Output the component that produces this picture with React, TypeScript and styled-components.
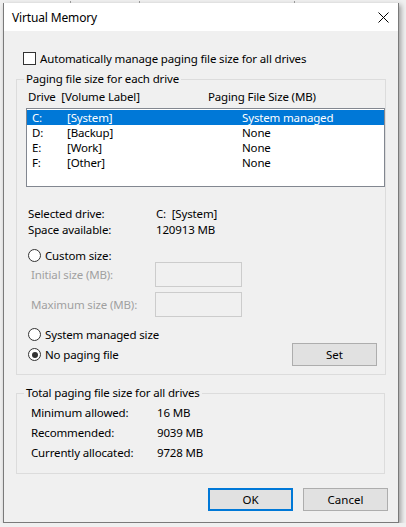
import React from 'react';
import styled, { createGlobalStyle } from 'styled-components';

const Global = createGlobalStyle`
  html, body {
    margin: 0;
    padding: 0;
    background: #f0f0f0;
    font-family: 'Segoe UI', 'Noto Sans', 'Open Sans', sans-serif;
    font-size: 11.5px;
    letter-spacing: -0.15px;
    color: #000;
  }
`;

const BackTabs = styled.div`
  height: 3px;
  overflow: hidden;
  white-space: nowrap;
  color: #333;

  span {
    display: inline-block;
    margin-top: -12px;
    padding: 0 8px;
    line-height: 14px;
    border-right: 1px solid #999;
  }
`;

const Window = styled.div`
  margin-left: 3px;
  width: 394px;
  border: 1px solid #7a7a7a;
  border-top: none;
  background: #f0f0f0;
  box-shadow: 2px 2px 5px rgba(0, 0, 0, 0.35);
`;

const TitleBar = styled.div`
  height: 28px;
  background: #fff;
  display: flex;
  align-items: center;
  justify-content: space-between;
  padding: 0 9px 0 8px;
`;

const Title = styled.span`
  font-size: 12px;
`;

const Body = styled.div`
  padding: 20px 10px 11px 12px;
  display: flex;
  flex-direction: column;
`;

const CheckRow = styled.label`
  display: flex;
  align-items: center;
  gap: 4px;
  height: 14px;
  margin-left: 7px;
`;

const Box = styled.span`
  width: 11px;
  height: 11px;
  border: 1px solid #333;
  background: #fff;
`;

const Group = styled.fieldset<{ $top: number; $padBottom: number }>`
  margin: ${(p) => p.$top}px 0 0 0;
  border: 1px solid #dcdcdc;
  padding: 0 0 ${(p) => p.$padBottom}px 9px;
  box-sizing: border-box;
  width: 369px;

  legend {
    padding: 0 2px;
    margin-left: -2px;
    line-height: 16px;
  }
`;

const ListHeader = styled.div`
  display: flex;
  margin-top: 2px;
  padding-left: 2px;
  line-height: 16px;

  span:first-child {
    width: 180px;
  }
`;

const ListBox = styled.div`
  margin-top: 3px;
  width: 357px;
  height: 76px;
  border: 1px solid #828790;
  background: #fff;
  padding-top: 1px;
`;

const DriveRow = styled.div<{ $selected?: boolean }>`
  display: flex;
  height: 15px;
  line-height: 15px;
  padding-left: 5px;
  background: ${(p) => (p.$selected ? '#0078d7' : 'transparent')};
  color: ${(p) => (p.$selected ? '#fff' : '#000')};

  span:nth-child(1) {
    width: 35px;
  }
  span:nth-child(2) {
    width: 175px;
  }
`;

const InfoRow = styled.div<{ $top?: number }>`
  display: flex;
  padding-left: 2px;
  line-height: 16px;
  margin-top: ${(p) => p.$top ?? 0}px;

  span:first-child {
    width: 128px;
  }
`;

const RadioRow = styled.label<{ $top?: number }>`
  display: flex;
  align-items: center;
  gap: 4px;
  height: 14px;
  margin-top: ${(p) => p.$top ?? 0}px;
  padding-left: 2px;
`;

const Radio = styled.span<{ $checked?: boolean }>`
  width: 11px;
  height: 11px;
  border: 1px solid #333;
  border-radius: 50%;
  background: #fff;
  display: flex;
  align-items: center;
  justify-content: center;

  &::after {
    content: '';
    width: 6px;
    height: 6px;
    border-radius: 50%;
    background: ${(p) => (p.$checked ? '#333' : 'transparent')};
  }
`;

const SizeRow = styled.div<{ $top?: number }>`
  display: flex;
  align-items: center;
  margin-top: ${(p) => p.$top ?? 0}px;
  color: #a0a0a0;

  span {
    width: 129px;
    padding-left: 5px;
    box-sizing: border-box;
  }
`;

const DisabledInput = styled.div`
  width: 85px;
  height: 23px;
  border: 1px solid #cccccc;
  background: #f0f0f0;
`;

const SetRow = styled.div`
  display: flex;
  align-items: center;
  justify-content: space-between;
  margin-top: 2px;
  padding-right: 8px;
`;

const Button = styled.button<{ $default?: boolean }>`
  width: 85px;
  height: 23px;
  font: inherit;
  color: #000;
  background: #e1e1e1;
  border: ${(p) => (p.$default ? '2px solid #0078d7' : '1px solid #adadad')};
  padding: 0;
`;

const TotalRow = styled.div`
  display: flex;
  line-height: 20px;
  padding-left: 5px;

  span:first-child {
    width: 126px;
  }
`;

const TotalList = styled.div`
  padding-top: 2px;
`;

const Footer = styled.div`
  display: flex;
  justify-content: flex-end;
  gap: 10px;
  margin-top: 14px;
`;

const drives = [
  { drive: 'C:', label: '[System]', size: 'System managed' },
  { drive: 'D:', label: '[Backup]', size: 'None' },
  { drive: 'E:', label: '[Work]', size: 'None' },
  { drive: 'F:', label: '[Other]', size: 'None' },
];

const totals = [
  ['Minimum allowed:', '16 MB'],
  ['Recommended:', '9039 MB'],
  ['Currently allocated:', '9728 MB'],
];

const CloseIcon = () => (
  <svg width='11' height='11' viewBox='0 0 11 11'>
    <path d='M0.5 0.5 L10.5 10.5 M10.5 0.5 L0.5 10.5' stroke='#000' strokeWidth='1' />
  </svg>
);

export default function App() {
  return (
    <>
      <Global />
      <BackTabs>
        <span>ual Effects</span>
        <span>Advanced</span>
        <span>Data Execution Prevention</span>
      </BackTabs>
      <Window>
        <TitleBar>
          <Title>Virtual Memory</Title>
          <CloseIcon />
        </TitleBar>
        <Body>
          <CheckRow>
            <Box />
            Automatically manage paging file size for all drives
          </CheckRow>

          <Group $top={6} $padBottom={8}>
            <legend>Paging file size for each drive</legend>
            <ListHeader>
              <span>Drive&nbsp; [Volume Label]</span>
              <span>Paging File Size (MB)</span>
            </ListHeader>
            <ListBox>
              {drives.map((d, i) => (
                <DriveRow key={d.drive} $selected={i === 0}>
                  <span>{d.drive}</span>
                  <span>{d.label}</span>
                  <span>{d.size}</span>
                </DriveRow>
              ))}
            </ListBox>

            <InfoRow $top={19}>
              <span>Selected drive:</span>
              <span>C:&nbsp; [System]</span>
            </InfoRow>
            <InfoRow>
              <span>Space available:</span>
              <span>120913 MB</span>
            </InfoRow>

            <RadioRow $top={10}>
              <Radio />
              Custom size:
            </RadioRow>
            <SizeRow>
              <span>Initial size (MB):</span>
              <DisabledInput />
            </SizeRow>
            <SizeRow $top={5}>
              <span>Maximum size (MB):</span>
              <DisabledInput />
            </SizeRow>

            <RadioRow $top={10}>
              <Radio />
              System managed size
            </RadioRow>
            <SetRow>
              <RadioRow>
                <Radio $checked />
                No paging file
              </RadioRow>
              <Button>Set</Button>
            </SetRow>
          </Group>

          <Group $top={10} $padBottom={10}>
            <legend>Total paging file size for all drives</legend>
            <TotalList>
              {totals.map(([k, v]) => (
                <TotalRow key={k}>
                  <span>{k}</span>
                  <span>{v}</span>
                </TotalRow>
              ))}
            </TotalList>
          </Group>

          <Footer>
            <Button $default>OK</Button>
            <Button>Cancel</Button>
          </Footer>
        </Body>
      </Window>
    </>
  );
}
